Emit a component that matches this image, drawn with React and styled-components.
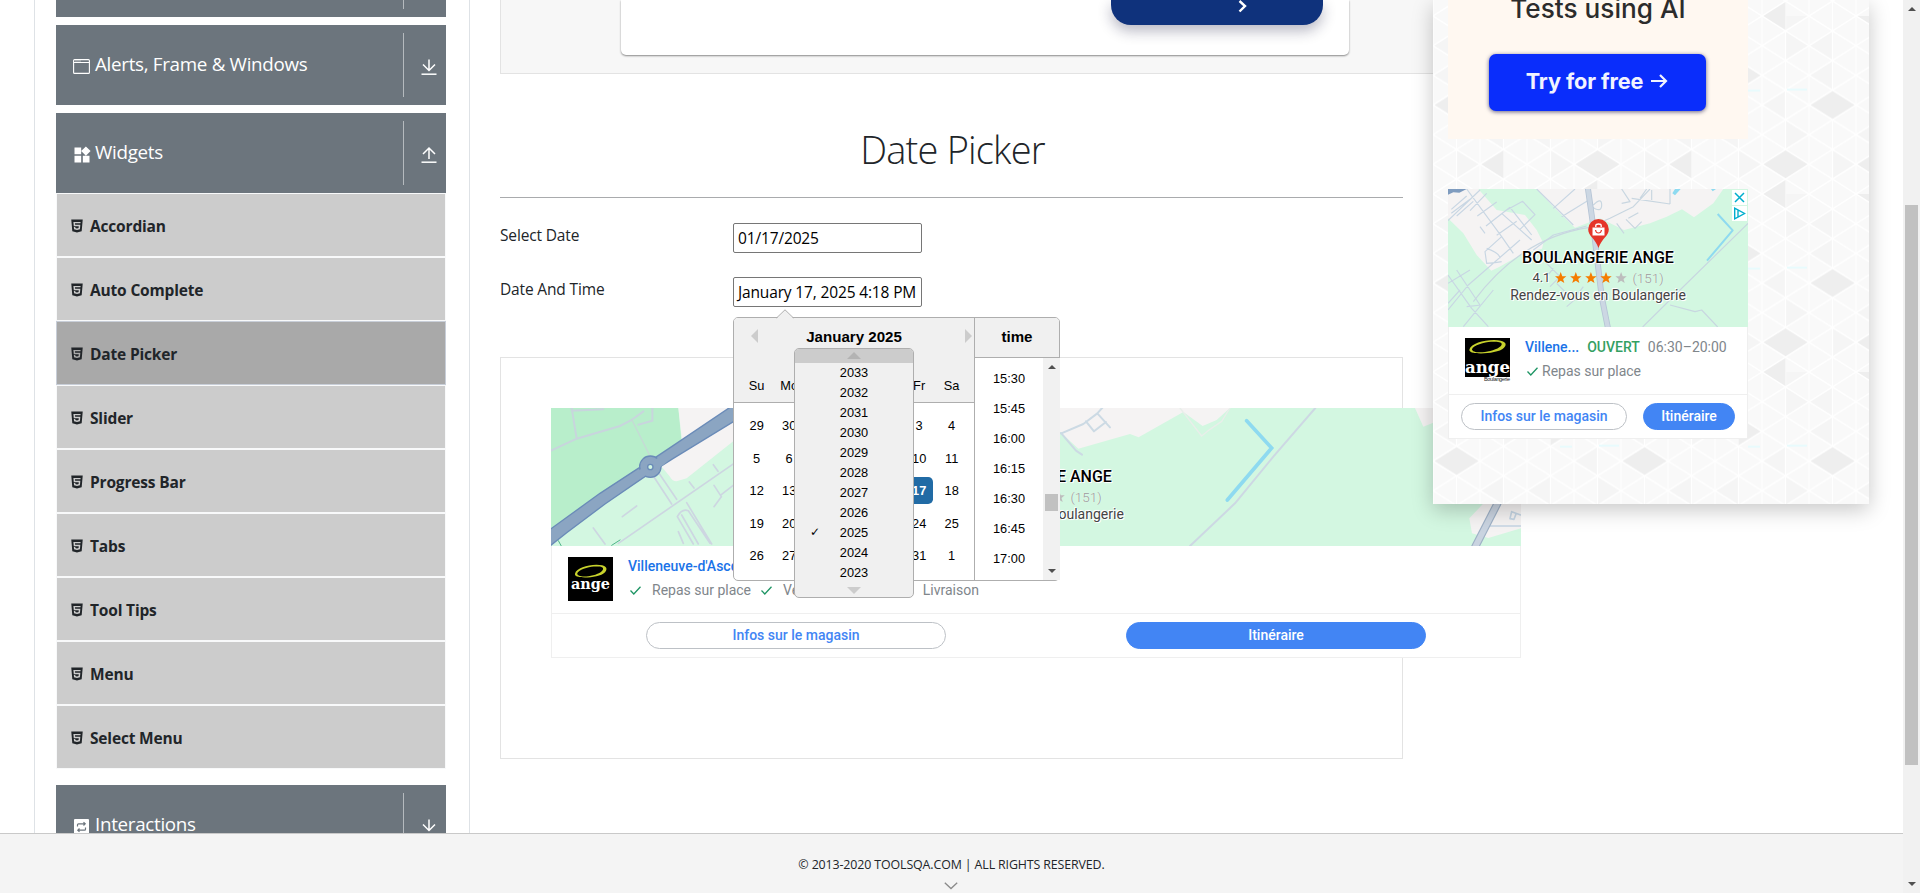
import React from "react";
import styled, { createGlobalStyle, css } from "styled-components";
import { MdWidgets } from "react-icons/md";
import { AiFillHtml5 } from "react-icons/ai";

const ui = '"Open Sans", "Noto Sans", sans-serif';
const arial = '"Liberation Sans", Arial, sans-serif';
const roboto = 'Roboto, "Liberation Sans", sans-serif';

const GlobalStyle = createGlobalStyle`
  *, *::before, *::after { box-sizing: border-box; }
  body {
    margin: 0;
    overflow: hidden;
    background: #fff;
    color: #212529;
    font-family: ${ui};
    font-size: 15.5px;
  }
  svg { display: block; flex: none; }
`;

/* ---------- page frame ---------- */

const Window = styled.div`
  display: flex;
  width: 1920px;
  height: 893px;
  overflow: hidden;
`;

const Page = styled.div`
  display: flex;
  flex-direction: column;
  width: 1903px;
  height: 893px;
`;

const Body = styled.div`
  display: flex;
  height: 833px;
  overflow: hidden;
  padding-left: 34px;
`;

const Footer = styled.footer`
  display: flex;
  flex-direction: column;
  align-items: center;
  height: 60px;
  padding-top: 21px;
  background: #f4f4f4;
  border-top: 1px solid #c9c9c9;
  font-size: 12.4px;
  letter-spacing: -0.12px;
  line-height: 20px;

  svg { margin: 7px 2px 0 0; }
`;

/* ---------- scrollbars ---------- */

const Track = styled.div`
  display: flex;
  flex-direction: column;
  align-items: center;
  width: 17px;
  height: ${(p) => p.$height}px;
  background: #f1f1f1;
`;

const Thumb = styled.div`
  width: 13px;
  height: ${(p) => p.$size}px;
  margin-top: ${(p) => p.$offset}px;
  margin-bottom: auto;
  background: #c1c1c1;
`;

const Arrow = styled.i`
  width: 0;
  height: 0;
  margin: ${(p) => (p.$down ? "0 0 7px" : "7px 0 0")};
  border: solid transparent;
  border-width: ${(p) => (p.$down ? "4px 4px 0" : "0 4px 4px")};
  border-${(p) => (p.$down ? "top" : "bottom")}-color: #505050;
`;

function Scrollbar({ height, offset, size }) {
  return (
    <Track $height={height}>
      <Arrow />
      <Thumb $offset={offset} $size={size} />
      <Arrow $down />
    </Track>
  );
}

/* ---------- sidebar ---------- */

const Sidebar = styled.nav`
  width: 436px;
  height: 833px;
  padding: 0 23px 0 21px;
  border: solid #dee2e6;
  border-width: 0 1px;
`;

const GroupHeader = styled.div`
  display: flex;
  align-items: center;
  width: 390px;
  height: 80px;
  margin-bottom: ${(p) => (p.$open ? 0 : 8)}px;
  margin-top: ${(p) => p.$shift || 0}px;
  padding-left: 16px;
  background: #6c757d;
  color: #fff;
  font-size: 18.8px;
  letter-spacing: -0.3px;
`;

const GroupIcon = styled.span`
  display: flex;
  justify-content: center;
  width: 19px;
  margin: 3px 4px 0 0;
`;

const GroupTitle = styled.span`
  flex: 1;
  padding-bottom: 2px;
`;

const GroupToggle = styled.span`
  display: flex;
  align-items: center;
  justify-content: center;
  width: 43px;
  height: 64px;
  padding: 4px 0 0 7px;
  border-left: 1px solid #b5babe;
`;

const MenuList = styled.ul`
  margin: 0;
  padding: 0;
  list-style: none;
`;

const MenuItem = styled.li`
  display: flex;
  align-items: center;
  gap: 5px;
  height: 64px;
  padding: 1px 0 0 12px;
  background: ${(p) => (p.$active ? "#a9a9a9" : "#ccc")};
  border: 1px solid ${(p) => (p.$active ? "#c8ced8" : "#f8f9fa")};
  font-size: 15.5px;
  font-weight: 700;
  letter-spacing: -0.17px;
`;

function ToggleIcon({ up }) {
  return (
    <svg width="16" height="18" viewBox="0 0 16 18" fill="none" stroke="#fff" strokeWidth="1.5">
      {up ? <path d="M8 13V2.5M2 8l6-6 6 6" /> : <path d="M8 1.500V12M2 6.500l6 6 6-6" />}
      <path d="M.5 16.200h15" />
    </svg>
  );
}

function WindowIcon() {
  return (
    <svg width="17" height="15" viewBox="0 0 17 15" fill="none" stroke="#fff" strokeWidth="1.1">
      <rect x=".6" y=".6" width="15.800" height="13.800" rx="1" />
      <path d="M1 3.500h15M2.500 2h1M4.500 2h1M6.500 2h1" />
    </svg>
  );
}

function RepeatIcon() {
  return (
    <svg width="15" height="16" viewBox="0 0 15 16" fill="none">
      <rect width="15" height="16" rx="1" fill="#fff" />
      <path d="M3.500 7.500V5.800q0-1 1-1h6.500M9.500 3.200 11.200 4.800 9.500 6.500M11.500 8.500v1.700q0 1-1 1H4M5.500 9.500 3.800 11.200 5.500 12.800" stroke="#6c757d" strokeWidth="1.200" />
    </svg>
  );
}

const menu = ["Accordian", "Auto Complete", "Date Picker", "Slider", "Progress Bar", "Tabs", "Tool Tips", "Menu", "Select Menu"];

function Group({ icon, title, open, shift }) {
  return (
    <GroupHeader $open={open} $shift={shift}>
      <GroupIcon>{icon}</GroupIcon>
      <GroupTitle>{title}</GroupTitle>
      <GroupToggle><ToggleIcon up={open} /></GroupToggle>
    </GroupHeader>
  );
}

/* ---------- main column ---------- */

const Main = styled.main`
  width: 903px;
  margin-left: 30px;
`;

const TopAd = styled.div`
  display: flex;
  align-items: flex-start;
  width: 970px;
  height: 74px;
  padding-left: 120px;
  background: #f7f7f7;
  border: 1px solid #e3e3e3;
  border-top: 0;
`;

const TopAdCard = styled.div`
  display: flex;
  justify-content: flex-end;
  width: 728px;
  height: 55px;
  padding-right: 26px;
  background: #fff;
  border-radius: 0 0 5px 5px;
  box-shadow: 0 1px 2px rgba(0, 0, 0, 0.45);
`;

const TopAdButton = styled.div`
  width: 212px;
  height: 25px;
  padding: 0 0 0 126px;
  background: #0f327c;
  border-radius: 0 0 20px 20px;
  box-shadow: 0 6px 14px rgba(20, 20, 60, 0.3);
`;

const Title = styled.h1`
  margin: 51px 0 0;
  padding-left: 2px;
  font-size: 38px;
  letter-spacing: -0.8px;
  font-weight: 300;
  line-height: 49px;
  text-align: center;
`;

const Rule = styled.hr`
  height: 1px;
  margin: 23px 0 25px;
  border: 0;
  background: #a9abad;
`;

const Field = styled.div`
  display: flex;
  height: 30px;
  margin-bottom: 24px;
  letter-spacing: -0.15px;
`;

const Label = styled.label`
  width: 233px;
  line-height: 25px;
`;

const InputWrap = styled.div`
  position: relative;
`;

const Input = styled.div`
  width: 189px;
  height: 30px;
  padding-left: 4px;
  border: 1px solid #767676;
  border-radius: 2px;
  background: #fff;
  color: #000;
  line-height: 29px;
  white-space: nowrap;
`;

const AdFrame = styled.section`
  width: 903px;
  height: 402px;
  margin-top: 50px;
  padding: 50px;
  border: 1px solid #e3e3e3;
`;

/* ---------- date picker popover ---------- */

const Popover = styled.div`
  position: absolute;
  z-index: 3;
  top: 40px;
  left: 0;
  display: flex;
  width: 327px;
  height: 264px;
  background: #fff;
  border: 1px solid #aeaeae;
  border-radius: 5px;
  color: #000;
  font: 12.8px ${arial};
  letter-spacing: 0;

  & > svg {
    position: absolute;
    top: -9px;
    left: 42px;
  }
`;

const Month = styled.div`
  width: 240px;
`;

const MonthHeader = styled.div`
  display: flex;
  flex-direction: column;
  justify-content: space-between;
  height: 85px;
  padding-top: 8px;
  background: #f0f0f0;
  border-bottom: 1px solid #aeaeae;
  border-radius: 4px 0 0 0;
`;

const MonthBar = styled.div`
  display: grid;
  grid-template-columns: 7px 1fr 7px;
  align-items: center;
  height: 22px;
  padding: 0 2px 3px 17px;
`;

const MonthTitle = styled.span`
  padding: 1px 15px 0 0;
  text-align: center;
  font-size: 15.1px;
  font-weight: 700;
`;

const NavArrow = styled.i`
  width: 0;
  height: 0;
  border: solid transparent;
  border-width: ${(p) => (p.$next ? "7px 0 7px 7px" : "7px 7px 7px 0")};
  border-${(p) => (p.$next ? "left" : "right")}-color: #ccc;
`;

const Week = styled.div`
  display: grid;
  grid-template-columns: repeat(7, 32.5px);
  height: 32.5px;
  padding-left: 6.4px;
  place-items: center;
`;

const Weeks = styled.div`
  padding-top: 6.4px;
`;

const Day = styled.span`
  width: 27.2px;
  height: 27.2px;
  border-radius: 4.8px;
  line-height: 27.2px;
  text-align: center;
  ${(p) => p.$selected && css`
    background: #216ba5;
    color: #fff;
    font-weight: 700;
  `}
`;

const Times = styled.div`
  width: 86px;
  height: 263px;
  border-left: 1px solid #aeaeae;
  margin-right: -1px;
`;

const TimeHeader = styled.div`
  width: 84px;
  height: 40px;
  padding-top: 8px;
  background: #f0f0f0;
  border-bottom: 1px solid #aeaeae;
  border-radius: 0 4px 0 0;
  font-size: 15.1px;
  font-weight: 700;
  line-height: 22px;
  text-align: center;
`;

const TimeBody = styled.div`
  display: flex;
  width: 85px;
`;

const TimeList = styled.div`
  width: 68px;
  padding-top: 6px;
`;

const Time = styled.div`
  line-height: 30px;
  text-align: center;
`;

const YearMenu = styled.div`
  position: absolute;
  z-index: 2;
  top: 30px;
  left: 60px;
  width: 120px;
  height: 250px;
  background: #f0f0f0;
  border: 1px solid #aeaeae;
  border-radius: 5px;
  overflow: hidden;
`;

const YearScroll = styled.div`
  display: flex;
  justify-content: center;
  height: 14px;
  padding-top: ${(p) => (p.$down ? 4 : 3)}px;
  background: ${(p) => (p.$down ? "transparent" : "#ccc")};

  &::before {
    content: "";
    border: solid transparent;
    height: 0;
    border-width: ${(p) => (p.$down ? "7px 7px 0" : "0 7px 7px")};
    border-${(p) => (p.$down ? "top" : "bottom")}-color: ${(p) => (p.$down ? "#ccc" : "#b3b3b3")};
  }
`;

const Year = styled.div`
  display: grid;
  grid-template-columns: 40px 38px 40px;
  height: 20px;
  line-height: 19px;
  text-align: center;
`;

const Tick = styled.span`
  font-family: "DejaVu Sans", sans-serif;
  font-size: 12px;
`;

const weeks = [
  [29, 30, 31, 1, 2, 3, 4],
  [5, 6, 7, 8, 9, 10, 11],
  [12, 13, 14, 15, 16, 17, 18],
  [19, 20, 21, 22, 23, 24, 25],
  [26, 27, 28, 29, 30, 31, 1],
];
const years = [2033, 2032, 2031, 2030, 2029, 2028, 2027, 2026, 2025, 2024, 2023];
const times = ["15:30", "15:45", "16:00", "16:15", "16:30", "16:45", "17:00"];

function DatePicker() {
  return (
    <Popover>
      <svg width="18" height="10" viewBox="0 0 18 10">
        <path d="M.5 9.500 9 1l8.500 8.500z" fill="#f0f0f0" />
        <path d="M.5 9 9 .800 17.500 9" fill="none" stroke="#aeaeae" />
      </svg>
      <Month>
        <MonthHeader>
          <MonthBar>
            <NavArrow />
            <MonthTitle>January 2025</MonthTitle>
            <NavArrow $next />
          </MonthBar>
          <Week>{["Su", "Mo", "Tu", "We", "Th", "Fr", "Sa"].map((d) => <Day key={d}>{d}</Day>)}</Week>
        </MonthHeader>
        <Weeks>
          {weeks.map((w, i) => (
            <Week key={i}>{w.map((d) => <Day key={d} $selected={d === 17}>{d}</Day>)}</Week>
          ))}
        </Weeks>
      </Month>
      <Times>
        <TimeHeader>time</TimeHeader>
        <TimeBody>
          <TimeList>{times.map((t) => <Time key={t}>{t}</Time>)}</TimeList>
          <Scrollbar height={222} offset={125} size={17} />
        </TimeBody>
      </Times>
      <YearMenu>
        <YearScroll />
        {years.map((y) => <Year key={y}><Tick>{y === 2025 ? "✓" : ""}</Tick>{y}</Year>)}
        <YearScroll $down />
      </YearMenu>
    </Popover>
  );
}

/* ---------- bakery advert ---------- */

const Ad = styled.article`
  width: ${(p) => (p.$wide ? 970 : 300)}px;
  height: 250px;
  background: #fff;
  border: 1px solid #efefef;
  border-top: 0;
  font: 14px ${roboto};
  line-height: 20px;
`;

const MapArea = styled.div`
  display: grid;
  justify-items: center;
  height: 138px;
  margin: 0 -1px;

  & > * { grid-area: 1 / 1; }
`;

const MapOverlay = styled.div`
  display: flex;
  flex-direction: column;
  align-items: center;
  padding-top: 30px;
  color: #444;
  text-shadow: 0 0 2px #fff, 0 0 2px #fff, 1px 1px 0 #fff, -1px -1px 0 #fff;
  white-space: nowrap;
`;

const PlaceName = styled.div`
  color: #000;
  font-size: 16px;
  font-weight: 500;
  line-height: 20px;
`;

const Rating = styled.div`
  display: flex;
  align-items: center;
  gap: 5px;
  height: 20px;
  font-size: 13px;
`;

const Reviews = styled.span`
  color: #999;
  font-size: 13.5px;
  font-weight: 300;
  text-shadow: 0 0 1px #fff;
`;

const Subtitle = styled.div`
  line-height: 15px;
`;

const Corner = styled.div`
  display: flex;
  flex-direction: column;
  gap: 1px;
  justify-self: end;
  padding: 1px 1px 0 0;
`;

const CornerButton = styled.span`
  width: 15px;
  height: 15px;
  background: #fff;
`;

const Info = styled.div`
  display: flex;
  height: 68px;
  padding: 11px 0 0 16px;
  border-bottom: 1px solid #efefef;
`;

const InfoText = styled.div`
  display: flex;
  flex-direction: column;
  gap: 4px;
  margin: -1px 0 0 14px;
  color: #80868b;
  white-space: nowrap;
`;

const InfoRow = styled.div`
  display: flex;
  align-items: center;
  height: 20px;
  gap: 8px;
`;

const Feature = styled.span`
  display: flex;
  align-items: center;
  gap: ${(p) => (p.$wide ? 11 : 4)}px;
  padding-left: 2px;

  svg { margin-top: 1px; }
`;

const Store = styled.span`
  color: #1a73e8;
  font-weight: 500;
`;

const Open = styled.span`
  color: #34a062;
  font-weight: 500;
`;

const Actions = styled.div`
  display: grid;
  grid-template-columns: ${(p) => (p.$wide ? "300px 300px" : "166px 92px")};
  column-gap: ${(p) => (p.$wide ? 180 : 16)}px;
  padding: ${(p) => (p.$wide ? "8px 0 0 94px" : "8px 0 0 12px")};
`;

const Action = styled.span`
  height: 27px;
  border: 1px solid ${(p) => (p.$primary ? "#4285f4" : "#bdc1c6")};
  border-radius: 14px;
  background: ${(p) => (p.$primary ? "#4285f4" : "#fff")};
  color: ${(p) => (p.$primary ? "#fff" : "#4285f4")};
  font-weight: 500;
  line-height: 25px;
  text-align: center;
`;

function Pin() {
  return (
    <svg width="21" height="29" viewBox="0 0 21 29">
      <path d="M10.500 0a10.300 10.300 0 0 0-10.300 10.300c0 7 7 9 10.300 18.700 3.300-9.700 10.300-11.700 10.300-18.700A10.300 10.300 0 0 0 10.500 0z" fill="#e53529" />
      <path d="M4.500 8.500h12v8h-12z" fill="#fff" />
      <path d="M7.800 8V6.500q0-1.500 2.700-1.500t2.700 1.500V8" fill="none" stroke="#fff" strokeWidth="1.300" />
      <path d="M7.500 11q.5 3 3 3t3-3" fill="none" stroke="#e53529" strokeWidth="1.200" />
    </svg>
  );
}

function Stars() {
  return (
    <svg width="72" height="12" viewBox="0 0 72 12">
      {[0, 1, 2, 3, 4].map((i) => (
        <path key={i} transform={`translate(${i * 15.1})`} d="M5.700 0 7.300 4.200 11.400 4.300 8.100 7 9.300 11 5.700 8.700 2.100 11 3.300 7 0 4.300 4.100 4.200z" fill={i < 4 ? "#f57c00" : "#bdbdbd"} />
      ))}
    </svg>
  );
}

function Check() {
  return (
    <svg width="11" height="9" viewBox="0 0 11 9" fill="none" stroke="#1e9564" strokeWidth="1.300">
      <path d="M.5 4.500 3.800 8 10.500.8" />
    </svg>
  );
}

function Logo({ small }) {
  return (
    <svg width="46" height="46" viewBox="0 0 46 46">
      <rect width="45" height={small ? 39 : 44} fill="#000" />
      <g transform={small ? "translate(1 1) scale(1 .93)" : "translate(4 7) scale(.87 .87)"}>
        <path fillRule="evenodd" fill="#c8d22c" d="M3.500 11C5 5 17 1 28 1s14 4 10 8.500-15 6-23 6S2.500 14 3.500 11zM6 11c0 3 6 4 13 3S34 10 35.500 6.500s-4-4-10.500-3.500S7 7 6 11z" />
      </g>
      <text x="22.500" y={small ? 35 : 32} textAnchor="middle" fill="#fff" fontFamily="DejaVu Serif, serif" fontWeight="700" fontSize={small ? 17 : 15} textLength={small ? 45 : 39} lengthAdjust="spacingAndGlyphs">ange</text>
      {small && <text x="19" y="43" fill="#222" fontFamily="Liberation Sans" fontSize="5.500" textLength="26">Boulangerie</text>}
    </svg>
  );
}

function WideMap() {
  return (
    <svg width="970" height="138" viewBox="0 0 970 138">
      <rect width="970" height="138" fill="#d3f7e1" />
      <g transform="scale(.33333) translate(-183 -174)" fill="none" strokeLinecap="round">
        <path d="M183 174H565L575 280 480 350 183 560z" fill="#b8eecb" />
        <path d="M565 174H760V250L590 385 560 394Q545 392 540 380L515 350 578 290z" fill="#f5f3f3" />
        <path d="M183 302 260 266 390 228 425 210 460 184M245 174 260 266M245 182 340 178M487 174V212L445 224" stroke="#c8d5dd" strokeWidth="6" />
        <path d="M425 208 482 322" stroke="#c5dad5" strokeWidth="4" />
        <path d="M490 378 545 462M507 370 560 448M385 580 740 335M397 500 440 468M310 534 345 582M598 396 612 414M670 344 684 364M672 406 694 440 672 470M694 434 740 398M590 458 665 582M562 500Q575 475 595 482L660 580M562 500 610 582M575 495 625 582M565 545 580 580" stroke="#cdd6e1" strokeWidth="5" />
        <path d="M150 560 330 430 440 358 482 332 545 290 760 145V197L550 325 482 368 345 462 230 548 150 612z" fill="#8ba5c2" stroke="#6a8bb8" strokeWidth="4" />
        <circle cx="481" cy="350" r="32" fill="#8ba5c2" stroke="#6a8bb8" strokeWidth="4" />
        <path d="M430 372 445 362 540 300 560 310 520 345 440 392z" fill="#8ba5c2" />
        <circle cx="481" cy="351" r="8" fill="#d3f7e1" stroke="#6a8bb8" strokeWidth="4" />
        <path d="M205 572 215 590M365 586 390 570" stroke="#4fb58a" strokeWidth="3" />
      </g>
      <g transform="scale(.33333) translate(1467 -54)" fill="none" strokeLinecap="round" strokeLinejoin="round">
        <path d="M0 54H570L530 90 488 108 430 66 296 142 270 132 115 176 60 125 0 90z" fill="#f5f3f3" />
        <path d="M420 54 485 138 510 118 545 94 570 54" stroke="#e9eeea" strokeWidth="4" />
        <path d="M0 130H64L130 102 172 70 190 50M64 130 108 182 126 194M138 94 162 124 198 96M172 70 210 112" stroke="#ccdae4" strokeWidth="6" />
        <path d="M450 468 585 340 700 200 826 54" stroke="#cdd8e3" strokeWidth="6" />
        <path d="M620 92 695 174 562 330" stroke="#8edaf0" strokeWidth="11" strokeLinejoin="miter" />
        <path d="M1125 54 1150 110 1200 90V54zM1443 330H1340L1288 385 1296 430 1345 444 1443 415z" fill="#f5f3f3" />
        <path d="M1345 408H1443M1410 386 1415 365 1442 375M1410 386 1422 388 1428 372" stroke="#c5d5e3" strokeWidth="5" />
        <path d="M1400 280 1370 345 1306 470" stroke="#9fb1c6" strokeWidth="24" />
        <path d="M1400 280 1370 345 1306 470" stroke="#c9d3e0" strokeWidth="17" />
      </g>
    </svg>
  );
}

function SmallMap() {
  return (
    <svg width="300" height="138" viewBox="84 27 900 414" fill="none" strokeLinecap="butt" strokeLinejoin="round">
      <path d="M84 27H984V441H84z" fill="#d3f7e1" />
      <path d="M84 27H175L230 90 315 105 350 150 370 190 366 206 310 220 236 262 214 272 170 225 130 160 84 115zM350 27H910L880 70 822 112 786 88 740 110 690 130 612 150 540 115 465 143 400 80z" fill="#f5f3f3" />
      <path d="M84 27H140L118 38 100 37 84 44z" fill="#7f9cbf" />
      <path d="M765 27H782L765 46 757 40zM873 27H888L878 34z" fill="#8edaf0" />
      <path d="M84 122 180 30M94 88 140 48M94 100 150 58M110 108 160 64M140 27 245 170 280 220M150 92 200 40M172 108 230 66M198 138 270 82M230 166 290 124M270 82 335 165M245 100 335 180M260 90 308 64 345 104 300 148M180 140 195 160M245 170 195 215 200 250Q215 250 245 245M200 205Q240 220 240 235M84 390 145 315 300 180M84 285 155 385 205 440M110 270 180 375M84 310 150 270M130 440 220 330M140 380 184 375M84 370 120 330M350 27 460 135M400 85 465 27M425 110 515 55M340 210 400 165 500 138" stroke="#c8d6e3" strokeWidth="3.500" />
      <path d="M160 365Q300 175 505 143L570 115 640 80 690 27M605 27 630 65 605 70M635 55 750 72M660 55 680 27M695 30V60M750 27V72M520 75Q545 50 545 75T515 80M590 130 612 160M618 118 645 145 665 125M625 115 655 98M380 250 420 290 390 320M400 265 380 290M410 310 460 360 490 320M440 380 475 350M984 130 780 330 668 441M750 375 825 395 845 390 893 441" stroke="#c8d6e0" strokeWidth="3.500" />
      <path d="M503 20 520 140 545 350 565 450" stroke="#b5c4d5" strokeWidth="18" />
      <path d="M503 20 520 140 545 350 565 450" stroke="#ccd7e3" strokeWidth="13" />
      <path d="M893 102 938 151 861 242" stroke="#8edaf0" strokeWidth="6" />
    </svg>
  );
}

function BakeryAd({ wide }) {
  return (
    <Ad $wide={wide}>
      <MapArea>
        {wide ? <WideMap /> : <SmallMap />}
        <MapOverlay>
          <Pin />
          <PlaceName>BOULANGERIE ANGE</PlaceName>
          <Rating>4.1<Stars /><Reviews>(151)</Reviews></Rating>
          <Subtitle>Rendez-vous en Boulangerie</Subtitle>
        </MapOverlay>
        {!wide && (
          <Corner>
            <CornerButton>
              <svg width="15" height="15" fill="none" stroke="#00aecd" strokeWidth="1.500"><path d="m3 3 9 9M12 3l-9 9" /></svg>
            </CornerButton>
            <CornerButton>
              <svg width="15" height="15" fill="none" stroke="#00aecd" strokeWidth="1.400"><path d="M2.700 2.200V12.800L12.500 7.500zM6 4.200V10.800" /></svg>
            </CornerButton>
          </Corner>
        )}
      </MapArea>
      <Info>
        <Logo small={!wide} />
        <InfoText>
          <InfoRow>
            {wide ? <Store>Villeneuve-d'Ascq</Store> : <><Store>Villene...</Store><Open>OUVERT</Open><span>06:30–20:00</span></>}
          </InfoRow>
          <InfoRow>
            {(wide ? ["Repas sur place", "Vente à emporter", "Livraison"] : ["Repas sur place"]).map((f) => (
              <Feature key={f} $wide={wide}><Check />{f}</Feature>
            ))}
          </InfoRow>
        </InfoText>
      </Info>
      <Actions $wide={wide}>
        <Action>Infos sur le magasin</Action>
        <Action $primary>Itinéraire</Action>
      </Actions>
    </Ad>
  );
}

/* ---------- right panel ---------- */

const Panel = styled.aside`
  position: relative;
  z-index: 2;
  display: grid;
  width: 436px;
  height: 504px;
  margin-left: 30px;
  background: #f9f9f9;
  box-shadow: 0 6px 20px rgba(0, 0, 0, 0.22);

  & > * { grid-area: 1 / 1; }
`;

const PanelContent = styled.div`
  z-index: 1;
  padding-left: 15px;
`;

const Banner = styled.div`
  display: flex;
  flex-direction: column;
  align-items: center;
  width: 300px;
  height: 139px;
  margin-bottom: 50px;
  background: #fff8f1;
  font-family: Inter, sans-serif;
`;

const BannerText = styled.div`
  height: 54px;
  color: #2c2c2c;
  font-size: 26.2px;
  font-weight: 500;
  line-height: 17px;
`;

const BannerButton = styled.div`
  display: flex;
  align-items: center;
  justify-content: center;
  gap: 8px;
  width: 217px;
  height: 57px;
  margin-right: 2px;
  background: #0a2dfb;
  border-radius: 7px;
  box-shadow: 0 1px 4px rgba(0, 0, 60, 0.6);
  color: #f1f3ff;
  font-size: 21.700px;
  font-weight: 700;
  padding-bottom: 3px;
  letter-spacing: -0.1px;
`;

const S = 23.5;
const U = 29.67;
const left = (k, v) => `M${k * S} ${v * U - U / 2}V${v * U + U / 2}L${(k - 1) * S} ${v * U}z`;
const right = (k, v) => `M${k * S} ${v * U - U / 2}V${v * U + U / 2}L${(k + 1) * S} ${v * U}z`;

function PanelTexture() {
  const verticals = [];
  const diagonals = [];
  for (let k = 0; k <= 8; k += 1) verticals.push(`M${k * S} 0V178`);
  for (let i = -5; i < 12; i += 1) {
    diagonals.push(`M0 ${i * U}L188 ${(i + 4) * U}`);
    diagonals.push(`M0 ${i * U}L188 ${(i - 4) * U}`);
  }
  return (
    <svg width="436" height="504">
      <defs>
        <pattern id="triangles" width="188" height="178.020" patternUnits="userSpaceOnUse" y="16">
          <rect width="188" height="178.020" fill="#f9f9f9" />
          <path fill="#f5f5f5" d={left(1, 1) + right(3, 2) + left(5, 4) + right(7, 1) + right(5, 5) + left(3, 4) + right(1, 5) + left(7, 3) + right(3, 0) + left(5, 1) + right(7, 4) + left(1, 2) + right(7, 0)} />
          <path d={verticals.join("")} stroke="#fff" strokeWidth="1.200" fill="none" />
          <path fill="#eeeeee" d={left(7, 5) + right(7, 5) + left(3, 5) + left(7, 6) + left(7, 0) + left(3, 0) + left(1, 3) + right(1, 3) + right(5, 2)} />
          <path d={diagonals.join("")} stroke="#fff" strokeWidth="1.500" fill="none" />
          <path d="M127 74.500h12M166 73.500h20" stroke="#e8fbfd" strokeWidth="2" />
        </pattern>
      </defs>
      <rect width="436" height="504" fill="url(#triangles)" />
    </svg>
  );
}

export default function App() {
  return (
    <>
      <GlobalStyle />
      <Window>
        <Page>
          <Body>
            <Sidebar>
              <Group title="" shift={-63} />
              <Group icon={<WindowIcon />} title="Alerts, Frame & Windows" />
              <Group icon={<MdWidgets size={20} />} title="Widgets" open />
              <MenuList>
                {menu.map((m) => (
                  <MenuItem key={m} $active={m === "Date Picker"}><AiFillHtml5 size={16} />{m}</MenuItem>
                ))}
              </MenuList>
              <Group icon={<RepeatIcon />} title="Interactions" shift={16} />
            </Sidebar>
            <Main>
              <TopAd>
                <TopAdCard>
                  <TopAdButton>
                    <svg width="10" height="14" viewBox="0 0 10 14" fill="none" stroke="#fff" strokeWidth="2.400"><path d="M2.500 1 8 6 2.500 11.500" /></svg>
                  </TopAdButton>
                </TopAdCard>
              </TopAd>
              <Title>Date Picker</Title>
              <Rule />
              <Field><Label>Select Date</Label><Input>01/17/2025</Input></Field>
              <Field>
                <Label>Date And Time</Label>
                <InputWrap>
                  <Input>January 17, 2025 4:18 PM</Input>
                  <DatePicker />
                </InputWrap>
              </Field>
              <AdFrame><BakeryAd wide /></AdFrame>
            </Main>
            <Panel>
              <PanelTexture />
              <PanelContent>
                <Banner>
                  <BannerText>Tests using AI</BannerText>
                  <BannerButton>
                    Try for free
                    <svg width="17" height="16" viewBox="0 0 17 16" fill="none" stroke="#f1f3ff" strokeWidth="2.200"><path d="M0 8h15M9 2l6 6-6 6" /></svg>
                  </BannerButton>
                </Banner>
                <BakeryAd />
              </PanelContent>
            </Panel>
          </Body>
          <Footer>
            © 2013-2020 TOOLSQA.COM | ALL RIGHTS RESERVED.
            <svg width="14" height="8" viewBox="0 0 14 8" fill="none" stroke="#8a8a8a" strokeWidth="1.300"><path d="M.8.8 7 6.500 13.200.8" /></svg>
          </Footer>
        </Page>
        <Scrollbar height={893} offset={194} size={560} />
      </Window>
    </>
  );
}
